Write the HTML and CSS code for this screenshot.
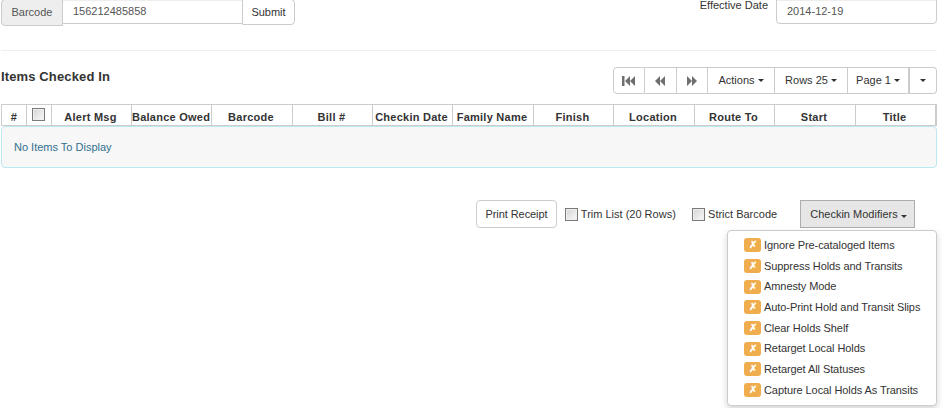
FILE: index.html
```html
<!DOCTYPE html>
<html lang="en">
<head>
<meta charset="utf-8">
<title>Items Checked In</title>
<link rel="stylesheet" href="styles.css">
</head>
<body>
<div class="page">
  <div class="top">
    <form class="scan">
      <span class="addon">Barcode</span>
      <div class="field field-barcode">156212485858</div>
      <button type="button" class="btn btn-submit">Submit</button>
    </form>
    <div class="date">
      <label class="date-label">Effective Date</label>
      <div class="field field-date">2014-12-19</div>
    </div>
  </div>
  <hr class="rule">
  <div class="head">
    <h2 class="title">Items Checked In</h2>
    <div class="pager">
      <button type="button" class="pg pg-first"><svg class="ico" width="14" height="10" viewBox="0 0 14 10"><path d="M0 0h2.500v10H0zM3 5l5-5v10zM8 5l5-5v10z"/></svg></button>
      <button type="button" class="pg pg-prev"><svg class="ico" width="11" height="10" viewBox="0 0 11 10"><path d="M0 5l5-5v10zM5 5l5-5v10z"/></svg></button>
      <button type="button" class="pg pg-next"><svg class="ico" width="11" height="10" viewBox="0 0 11 10"><path d="M0 0l5 5-5 5zM5 0l5 5-5 5z"/></svg></button>
      <button type="button" class="pg pg-actions">Actions <i class="caret"></i></button>
      <button type="button" class="pg pg-rows">Rows 25 <i class="caret"></i></button>
      <button type="button" class="pg pg-page">Page 1 <i class="caret"></i></button>
      <button type="button" class="pg pg-more"><i class="caret"></i></button>
    </div>
  </div>
  <div class="grid-head">
    <div class="col col-num">#</div>
    <div class="col col-check"><input type="checkbox" class="check"></div>
    <div class="col">Alert Msg</div>
    <div class="col">Balance Owed</div>
    <div class="col">Barcode</div>
    <div class="col">Bill #</div>
    <div class="col">Checkin Date</div>
    <div class="col">Family Name</div>
    <div class="col">Finish</div>
    <div class="col">Location</div>
    <div class="col">Route To</div>
    <div class="col">Start</div>
    <div class="col">Title</div>
  </div>
  <div class="alert">No Items To Display</div>
  <div class="foot">
    <button type="button" class="btn btn-print">Print Receipt</button>
    <label class="opt opt-trim"><input type="checkbox" class="check"> Trim List (20 Rows)</label>
    <label class="opt opt-strict"><input type="checkbox" class="check"> Strict Barcode</label>
    <div class="dropdown">
      <button type="button" class="btn btn-mod">Checkin Modifiers <i class="caret"></i></button>
      <ul class="menu">
        <li class="menu-item"><span class="badge">✗</span>Ignore Pre-cataloged Items</li>
        <li class="menu-item"><span class="badge">✗</span>Suppress Holds and Transits</li>
        <li class="menu-item"><span class="badge">✗</span>Amnesty Mode</li>
        <li class="menu-item"><span class="badge">✗</span>Auto-Print Hold and Transit Slips</li>
        <li class="menu-item"><span class="badge">✗</span>Clear Holds Shelf</li>
        <li class="menu-item"><span class="badge">✗</span>Retarget Local Holds</li>
        <li class="menu-item"><span class="badge">✗</span>Retarget All Statuses</li>
        <li class="menu-item"><span class="badge">✗</span>Capture Local Holds As Transits</li>
      </ul>
    </div>
  </div>
</div>
</body>
</html>
```
FILE: styles.css
```css
* { box-sizing: border-box; }
html, body { margin: 0; padding: 0; height: 408px; overflow: hidden; background: #fff; }
body { font-family: "Liberation Sans", Arial, sans-serif; font-size: 11px; line-height: 15px; color: #333; }
.page { width: 936px; margin-left: 1px; }
button { font: inherit; color: inherit; }

.top { display: flex; justify-content: space-between; height: 25px; }
.scan { display: flex; margin-top: -1px; height: 27px; }
.addon { width: 62px; background: #eee; border: 1px solid #ccc; border-radius: 4px 0 0 4px; display: flex; align-items: center; justify-content: center; color: #555; }
.field { height: 26px; border: 1px solid #ccc; background: #fff; color: #555; padding: 0 10px; display: flex; align-items: center; box-shadow: inset 0 1px 1px rgba(0,0,0,.075); }
.field-barcode { width: 180px; height: 25px; border-left: 0; border-top-color: #eee; }
.btn { background: #fff; border: 1px solid #ccc; border-radius: 4px; padding: 0; cursor: pointer; }
.btn-submit { width: 53px; height: 26px; border-radius: 0 4px 4px 0; margin-left: -1px; }
.date { display: flex; gap: 8px; }
.date-label { margin-top: -2px; }
.field-date { width: 161px; height: 25px; border-radius: 0 0 4px 4px; margin-top: -1px; }

.rule { border: 0; border-top: 1px solid #eee; margin: 25px 0 0; }
.head { display: flex; justify-content: space-between; align-items: flex-start; margin-top: 16px; }
.title { margin: 0; font-size: 13px; font-weight: 700; line-height: 20px; letter-spacing: .13px; }
.pager { display: flex; height: 27px; }
.pg { height: 27px; background: #fff; border: 1px solid #ccc; border-left: 0; padding: 0; display: flex; align-items: center; justify-content: center; gap: 3px; }
.pg-first { width: 32px; border-left: 1px solid #ccc; border-radius: 4px 0 0 4px; }
.pg-prev { width: 32px; }
.pg-next { width: 31px; }
.pg-actions { width: 67px; }
.pg-rows { width: 73px; }
.pg-page { width: 62px; border-right: 2px solid #ccc; }
.pg-more { width: 27px; border-radius: 0 4px 4px 0; }
.ico { fill: #6f6f6f; display: block; }
.caret { display: inline-block; width: 0; height: 0; border-top: 3px solid #333; border-left: 3px solid transparent; border-right: 3px solid transparent; }

.grid-head { display: grid; grid-template-columns: 25px 25px 80px 80px 81px 80px 80px 81px 80px 81px 80px 81px 1fr; height: 22px; margin-top: 10px; border: 1px solid #ccc; border-right-width: 2px; background: #fff; }
.col { border-right: 1px solid #ccc; padding-right: 2px; font-weight: 700; text-align: center; line-height: 24px; letter-spacing: .25px; color: #333; white-space: nowrap; overflow: hidden; }
.col:last-child { border-right: 0; }
.col-num { padding-right: 0; }
.col-check { padding-right: 0; }
.col-check .check { display: block; margin: 3px 0 0 5px; }
.check { appearance: none; width: 13px; height: 13px; margin: 0; border: 1px solid #7a7a7a; background: linear-gradient(135deg, #d4d4d4, #fafafa); box-shadow: inset 0 0 0 1px #eee; vertical-align: -3px; }

.alert { height: 42px; background: #f7f7f7; border: 1px solid #bce8f1; border-radius: 4px; padding: 0 12px; display: flex; align-items: center; color: #31708f; }

.foot { display: flex; align-items: flex-start; justify-content: flex-end; margin-top: 32px; padding-right: 22px; }
.btn-print { width: 81px; height: 28px; letter-spacing: -.08px; }
.opt { display: block; margin-top: 7px; white-space: nowrap; }
.opt-trim { margin-left: 8px; width: 127px; }
.opt-strict { width: 108px; }
.dropdown { position: relative; }
.btn-mod { width: 115px; height: 28px; padding-left: 2px; background: #e6e6e6; border-color: #adadad; border-radius: 0; }
.menu { position: absolute; top: 30px; right: -22px; width: 210px; height: 176px; margin: 0; padding: 4px 0 0; list-style: none; background: #fff; border: 1px solid #ccc; border-radius: 4px; box-shadow: 0 3px 6px rgba(0,0,0,.175); }
.menu-item { display: flex; align-items: center; height: 20.700px; padding-left: 16px; letter-spacing: -.08px; white-space: nowrap; color: #333; }
.badge { width: 17px; height: 14px; margin-right: 3px; background: #f0ad4e; border-radius: 3px; color: #fff; font-size: 10px; font-weight: 700; line-height: 14px; text-align: center; }
```
